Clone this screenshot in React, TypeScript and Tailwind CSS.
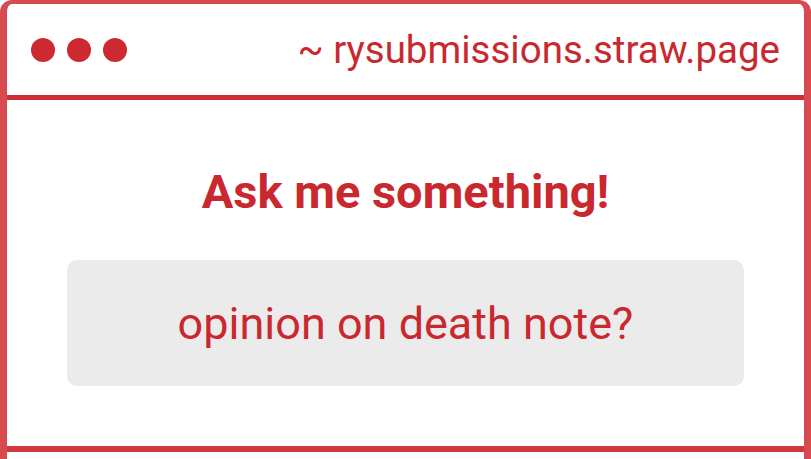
export default function App() {
  return (
    <div className="h-[459px] w-[811px] overflow-hidden bg-white font-['Roboto',sans-serif]">
      <div className="flex h-full flex-col rounded-t-[12px] border-x-[7px] border-t-4 border-[#d64a50]">
        {/* header bar */}
        <div className="flex h-[91px] shrink-0 items-center justify-between px-6">
          <div className="flex gap-3">
            <span className="h-6 w-6 rounded-full bg-[#cc2a30]" />
            <span className="h-6 w-6 rounded-full bg-[#cc2a30]" />
            <span className="h-6 w-6 rounded-full bg-[#cc2a30]" />
          </div>
          <p className="text-[38.5px] leading-[39px] text-[#c9282e]">~ rysubmissions.straw.page</p>
        </div>
        <div className="h-[5px] shrink-0 bg-[#cc2e33]" />

        {/* content */}
        <div className="flex h-[346px] shrink-0 flex-col items-center px-[60px] pt-[68px]">
          <h1 className="text-[47px] font-bold leading-[47px] text-[#c9282e]">Ask me something!</h1>
          <div className="mt-[45px] flex h-[126px] w-full items-center justify-center rounded-[10px] bg-[#ecebec]">
            <p className="text-[45px] leading-[45px] text-[#c9282e]">opinion on death note?</p>
          </div>
        </div>
        <div className="h-[6px] shrink-0 bg-[#d2383e]" />
        <div className="flex-1" />
      </div>
    </div>
  );
}
